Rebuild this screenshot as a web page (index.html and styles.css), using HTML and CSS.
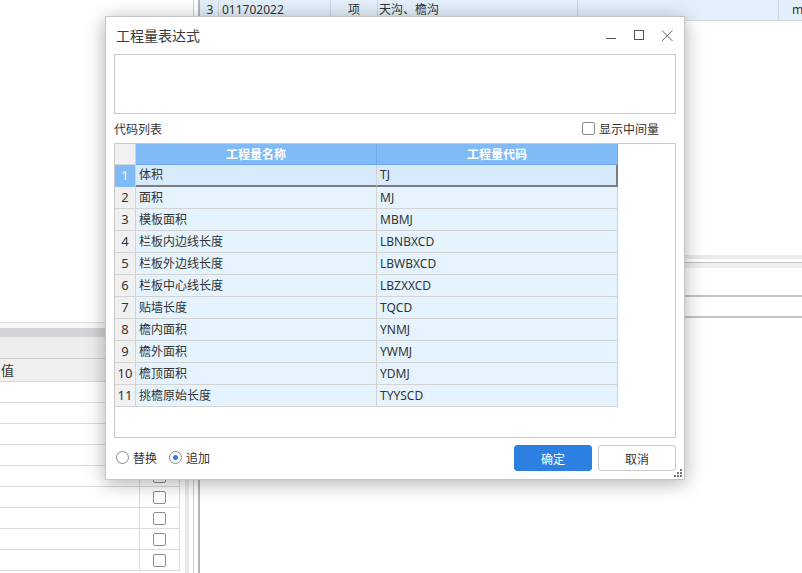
FILE: index.html
```html
<!DOCTYPE html>
<html lang="zh-CN">
<head>
<meta charset="utf-8">
<title>工程量表达式</title>
<link rel="stylesheet" href="styles.css">
</head>
<body>
<div class="app">
  <div class="left-pane">
    <div class="left-main">
      <div class="left-top"></div>
      <div class="left-bar"></div>
      <div class="left-head"></div>
      <div class="left-colhead"><span class="clip-text">值</span></div>
      <div class="left-rows">
        <div class="lrow"><div class="lc1"></div><div class="lc2"><span class="cb"></span></div></div>
        <div class="lrow"><div class="lc1"></div><div class="lc2"><span class="cb"></span></div></div>
        <div class="lrow"><div class="lc1"></div><div class="lc2"><span class="cb"></span></div></div>
        <div class="lrow"><div class="lc1"></div><div class="lc2"><span class="cb"></span></div></div>
        <div class="lrow"><div class="lc1"></div><div class="lc2"><span class="cb"></span></div></div>
        <div class="lrow"><div class="lc1"></div><div class="lc2"><span class="cb"></span></div></div>
        <div class="lrow"><div class="lc1"></div><div class="lc2"><span class="cb"></span></div></div>
        <div class="lrow"><div class="lc1"></div><div class="lc2"><span class="cb"></span></div></div>
        <div class="lrow"><div class="lc1"></div><div class="lc2"><span class="cb"></span></div></div>
      </div>
    </div>
    <div class="left-scroll"><div class="scroll-track"></div></div>
  </div>
  <div class="split"></div>
  <div class="right-pane">
    <div class="rtop">
      <div class="rc rc-no">3</div>
      <div class="rc rc-code">011702022</div>
      <div class="rc rc-unit">项</div>
      <div class="rc rc-name">天沟、檐沟</div>
      <div class="rc rc-empty"></div>
      <div class="rc rc-m">m</div>
    </div>
    <div class="rgap1"></div>
    <div class="rband-a"></div>
    <div class="rgap2"></div>
    <div class="rline-thin"></div>
    <div class="rband-b"></div>
    <div class="rgap3"></div>
    <div class="rline-thick"></div>
    <div class="rgap4"></div>
    <div class="rline-thick"></div>
  </div>
</div>

<div class="dialog">
  <div class="titlebar">
    <div class="title">工程量表达式</div>
    <div class="winctl">
      <svg width="12" height="12" viewBox="0 0 12 12"><line x1="1" y1="8.5" x2="11" y2="8.5" stroke="#555" stroke-width="1"/></svg>
      <svg width="12" height="12" viewBox="0 0 12 12"><rect x="1.5" y="0.5" width="9" height="9" fill="none" stroke="#555" stroke-width="1"/></svg>
      <svg width="12" height="12" viewBox="0 0 12 12"><path d="M1 0.5 L11.5 11 M11.5 0.5 L1 11" stroke="#666" stroke-width="1" fill="none"/></svg>
    </div>
  </div>
  <div class="dbody">
    <div class="expr"></div>
    <div class="listhead">
      <span class="label">代码列表</span>
      <label class="chk"><span class="box"></span><span>显示中间量</span></label>
    </div>
    <div class="grid">
      <div class="gtable">
        <div class="cell corner"></div>
        <div class="cell hd">工程量名称</div>
        <div class="cell hd">工程量代码</div>

        <div class="cell num sel-num">1</div>
        <div class="cell dat sel">体积</div>
        <div class="cell dat sel sel-last">TJ</div>

        <div class="cell num">2</div><div class="cell dat">面积</div><div class="cell dat">MJ</div>
        <div class="cell num">3</div><div class="cell dat">模板面积</div><div class="cell dat">MBMJ</div>
        <div class="cell num">4</div><div class="cell dat">栏板内边线长度</div><div class="cell dat">LBNBXCD</div>
        <div class="cell num">5</div><div class="cell dat">栏板外边线长度</div><div class="cell dat">LBWBXCD</div>
        <div class="cell num">6</div><div class="cell dat">栏板中心线长度</div><div class="cell dat">LBZXXCD</div>
        <div class="cell num">7</div><div class="cell dat">贴墙长度</div><div class="cell dat">TQCD</div>
        <div class="cell num">8</div><div class="cell dat">檐内面积</div><div class="cell dat">YNMJ</div>
        <div class="cell num">9</div><div class="cell dat">檐外面积</div><div class="cell dat">YWMJ</div>
        <div class="cell num">10</div><div class="cell dat">檐顶面积</div><div class="cell dat">YDMJ</div>
        <div class="cell num">11</div><div class="cell dat">挑檐原始长度</div><div class="cell dat">TYYSCD</div>
      </div>
    </div>
    <div class="footer">
      <div class="radios">
        <label class="radio"><span class="circle"></span><span>替换</span></label>
        <label class="radio"><span class="circle on"></span><span>追加</span></label>
      </div>
      <div class="buttons">
        <button class="btn primary">确定</button>
        <button class="btn">取消</button>
      </div>
    </div>
  </div>
  <svg class="grip" width="10" height="10" viewBox="0 0 10 10">
    <rect x="7" y="1" width="2" height="2" fill="#777"/>
    <rect x="4" y="4" width="2" height="2" fill="#777"/>
    <rect x="7" y="4" width="2" height="2" fill="#777"/>
    <rect x="1" y="7" width="2" height="2" fill="#777"/>
    <rect x="4" y="7" width="2" height="2" fill="#777"/>
    <rect x="7" y="7" width="2" height="2" fill="#777"/>
  </svg>
</div>
</body>
</html>
```

FILE: styles.css
```css
* { box-sizing: border-box; }
html, body {
  margin: 0;
  padding: 0;
  width: 802px;
  height: 573px;
  overflow: hidden;
  background: #fff;
  font-family: "Noto Sans", "Noto Sans CJK SC", sans-serif;
  font-size: 12px;
  color: #333;
}
.app {
  display: flex;
  width: 802px;
  height: 573px;
}

/* ---------- left background pane ---------- */
.left-pane {
  display: flex;
  width: 193px;
  flex: none;
}
.left-main {
  width: 180px;
  display: flex;
  flex-direction: column;
}
.left-top {
  height: 328px;
  background: linear-gradient(#fff 0 322px, #dedede 322px 323px, #f7f7f7 323px);
}
.left-bar {
  height: 9px;
  background: #d2d4d8;
}
.left-head {
  height: 22px;
  background: #eeeeee;
  border-bottom: 1px solid #d0d0d0;
}
.left-colhead {
  height: 23px;
  background: #efefef;
  border-bottom: 1px solid #d6d6d6;
  line-height: 22px;
  font-family: "Noto Sans CJK SC", sans-serif;
  font-size: 13px;
  overflow: hidden;
  white-space: nowrap;
  padding-left: 1px;
}
.lrow {
  display: flex;
  height: 21px;
  border-bottom: 1px solid #dadada;
}
.lc1 {
  width: 140px;
  border-right: 1px solid #dadada;
}
.lc2 {
  width: 40px;
  border-right: 1px solid #dadada;
  display: flex;
  align-items: center;
  justify-content: center;
}
.cb {
  width: 13px;
  height: 13px;
  border: 1px solid #8c8c8c;
  border-radius: 2px;
  background: #fff;
}
.left-scroll {
  width: 13px;
  display: flex;
  flex-direction: column;
  padding-left: 5px;
}
.scroll-track {
  margin-top: 337px;
  width: 4px;
  flex: 1;
  background: #e9e9e9;
}
.split {
  width: 7px;
  flex: none;
  border-left: 1px solid #cfcfcf;
  border-right: 2px solid #b4b4b4;
}

/* ---------- right background pane ---------- */
.right-pane {
  flex: 1;
  display: flex;
  flex-direction: column;
}
.rtop {
  display: flex;
  height: 21px;
  background: #e3f0fb;
  border-bottom: 1px solid #cfd9e3;
  line-height: 20px;
  white-space: nowrap;
}
.rc {
  border-right: 1px solid #cdd7e1;
  overflow: hidden;
  flex: none;
}
.rc-no { width: 19px; text-align: center; padding-left: 2px; }
.rc-code { width: 112px; padding-left: 3px; }
.rc-unit { width: 47px; text-align: center; }
.rc-name { width: 200px; padding-left: 1px; }
.rc-empty { width: 201px; }
.rc-m { flex: 1; border-right: none; padding-left: 13px; }
.rgap1 { height: 234px; }
.rband-a { height: 4px; background: #eaeaea; }
.rgap2 { height: 3px; }
.rline-thin { height: 1px; background: #c2c2c2; }
.rband-b { height: 5px; background: #efefef; }
.rgap3 { height: 27px; }
.rline-thick { height: 2px; background: #c0c4c9; }
.rgap4 { height: 19px; }

/* ---------- dialog ---------- */
.dialog {
  position: absolute;
  left: 105px;
  top: 16px;
  width: 580px;
  height: 464px;
  background: #fff;
  border: 1px solid #c4c4c4;
  box-shadow: 0 3px 18px rgba(0, 0, 0, 0.32);
  display: flex;
  flex-direction: column;
}
.titlebar {
  height: 37px;
  flex: none;
  display: flex;
  justify-content: space-between;
  padding-left: 10px;
}
.title {
  font-family: "Noto Sans CJK SC", sans-serif;
  font-size: 14px;
  line-height: 20px;
  margin-top: 8px;
  color: #3a3a3a;
}
.winctl {
  display: flex;
  gap: 16px;
  margin-top: 13px;
  padding-right: 11px;
  height: 12px;
}
.winctl svg { display: block; }
.dbody {
  flex: 1;
  display: flex;
  flex-direction: column;
  padding: 0 8px;
}
.expr {
  height: 60px;
  border: 1px solid #c9c9c9;
  background: #fff;
}
.listhead {
  height: 29px;
  display: flex;
  align-items: center;
  justify-content: space-between;
  padding-right: 17px;
  line-height: 16px;
}
.label { font-family: "Noto Sans CJK SC", sans-serif; }
.chk {
  display: flex;
  align-items: center;
  gap: 4px;
  font-family: "Noto Sans CJK SC", sans-serif;
}
.chk .box {
  width: 13px;
  height: 13px;
  border: 1px solid #8a8a8a;
  border-radius: 2px;
  background: #fff;
}
.grid {
  height: 295px;
  border: 1px solid #c9c9c9;
  background: #fff;
}
.gtable {
  display: grid;
  grid-template-columns: 21px 241px 241px;
  grid-template-rows: 21px repeat(11, 22px);
  width: 503px;
}
.cell {
  border-right: 1px solid #d3d3d3;
  border-bottom: 1px solid #d3d3d3;
  line-height: 21px;
  white-space: nowrap;
  overflow: hidden;
}
.corner { background: #f0f0f0; }
.hd {
  background: #80bbf8;
  color: #fff;
  font-weight: bold;
  text-align: center;
  border-right-color: #6ea9ea;
  border-bottom-color: #6ea9ea;
  line-height: 20px;
  font-family: "Noto Sans CJK SC", sans-serif;
}
.num {
  background: #f0f0f0;
  text-align: center;
  font-size: 13px;
}
.dat {
  background: #e5f3fe;
  padding-left: 3px;
}
.sel-num {
  background: #80bbf8;
  color: #fff;
  border-bottom-color: #80bbf8;
}
.sel {
  background: #d6eafc;
  border-bottom: 2px solid #7c7c7c;
  line-height: 20px;
}
.sel-last { border-right: 2px solid #7c7c7c; }
.footer {
  flex: 1;
  display: flex;
  justify-content: space-between;
  align-items: flex-start;
  padding-top: 7px;
}
.radios {
  display: flex;
  gap: 12px;
  height: 24px;
  align-items: center;
  padding-left: 2px;
  font-family: "Noto Sans CJK SC", sans-serif;
}
.radio {
  display: flex;
  align-items: center;
  gap: 4px;
}
.circle {
  width: 13px;
  height: 13px;
  border: 1px solid #8a8a8a;
  border-radius: 50%;
  background: #fff;
  display: flex;
  align-items: center;
  justify-content: center;
}
.circle.on::after {
  content: "";
  width: 5px;
  height: 5px;
  border-radius: 50%;
  background: #2b80e0;
}
.buttons {
  display: flex;
  gap: 6px;
}
.btn {
  width: 78px;
  height: 26px;
  border: 1px solid #c9c9c9;
  border-radius: 3px;
  background: #fff;
  color: #333;
  font-family: "Noto Sans CJK SC", sans-serif;
  font-size: 12px;
  padding: 0;
}
.btn.primary {
  background: #2b80e0;
  border-color: #2b80e0;
  color: #fff;
}
.grip {
  position: absolute;
  right: 1px;
  bottom: 1px;
}
```
